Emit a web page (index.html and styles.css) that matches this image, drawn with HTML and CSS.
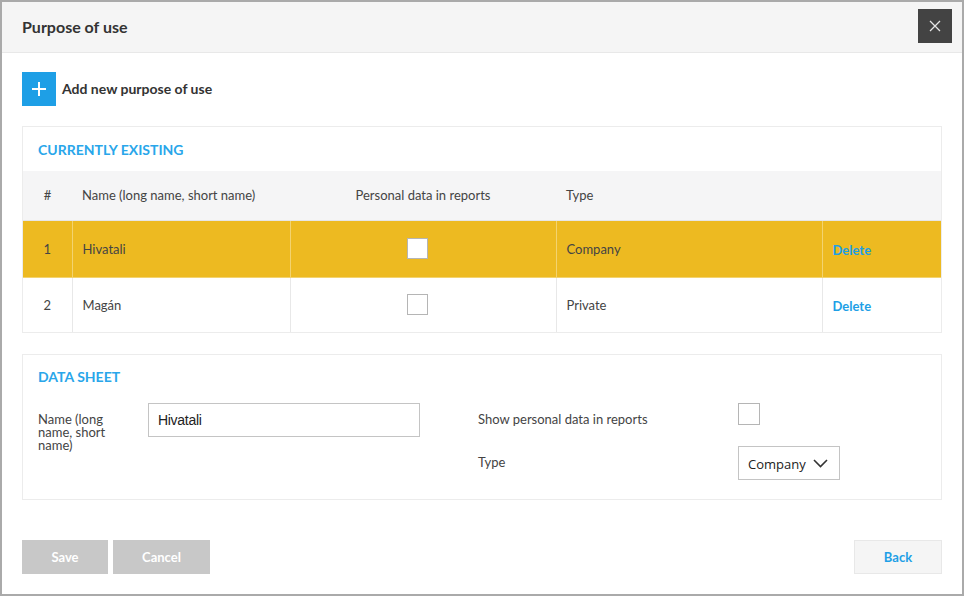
FILE: index.html
```html
<!DOCTYPE html>
<html>
<head>
<meta charset="utf-8">
<link rel="stylesheet" href="styles.css">
</head>
<body>
<div class="dialog">
  <div class="dialog-header">
    <h1 class="dialog-title">Purpose of use</h1>
    <button class="close-btn" aria-label="Close">
      <svg width="12" height="12" viewBox="0 0 12 12"><path d="M1 1L11 11M11 1L1 11" stroke="#e6e6e6" stroke-width="1.3" fill="none"/></svg>
    </button>
  </div>
  <div class="dialog-body">
    <div class="add-row">
      <span class="add-icon">
        <svg width="16" height="16" viewBox="0 0 16 16"><path d="M8 1V15M1 8H15" stroke="#fff" stroke-width="2" fill="none"/></svg>
      </span>
      <span class="add-label">Add new purpose of use</span>
    </div>

    <section class="panel">
      <h2 class="panel-title">CURRENTLY EXISTING</h2>
      <table class="list">
        <colgroup>
          <col class="c-num"><col class="c-name"><col class="c-pers"><col class="c-type"><col class="c-act">
        </colgroup>
        <thead>
          <tr>
            <th class="center">#</th>
            <th>Name (long name, short name)</th>
            <th class="center">Personal data in reports</th>
            <th>Type</th>
            <th></th>
          </tr>
        </thead>
        <tbody>
          <tr class="selected">
            <td class="center">1</td>
            <td>Hivatali</td>
            <td class="center"><span class="checkbox"></span></td>
            <td>Company</td>
            <td><a class="link">Delete</a></td>
          </tr>
          <tr>
            <td class="center">2</td>
            <td>Magán</td>
            <td class="center"><span class="checkbox"></span></td>
            <td>Private</td>
            <td><a class="link">Delete</a></td>
          </tr>
        </tbody>
      </table>
    </section>

    <section class="panel sheet">
      <h2 class="panel-title">DATA SHEET</h2>
      <div class="form">
        <div class="form-col left">
          <div class="form-row">
            <label class="name-label">Name (long name, short name)</label>
            <div class="text-input">Hivatali</div>
          </div>
        </div>
        <div class="form-col right">
          <div class="form-row">
            <span class="field-label">Show personal data in reports</span>
            <span class="checkbox big"></span>
          </div>
          <div class="form-row">
            <span class="field-label">Type</span>
            <div class="select">
              <span>Company</span>
              <svg width="15" height="9" viewBox="0 0 15 9"><path d="M1 1L7.5 7.5L14 1" stroke="#333" stroke-width="1.6" fill="none"/></svg>
            </div>
          </div>
        </div>
      </div>
    </section>

    <div class="footer">
      <div class="footer-left">
        <button class="btn btn-disabled save">Save</button>
        <button class="btn btn-disabled cancel">Cancel</button>
      </div>
      <button class="btn btn-back">Back</button>
    </div>
  </div>
</div>
</body>
</html>
```

FILE: styles.css
```css
* { box-sizing: border-box; }
html, body { margin: 0; padding: 0; background: #fff; }
body {
  font-family: Lato, "Open Sans", sans-serif;
  color: #444;
  font-size: 13px;
}
.dialog {
  width: 964px;
  height: 596px;
  border: 2px solid #aaaaaa;
  background: #fff;
  display: flex;
  flex-direction: column;
}
.dialog-header {
  height: 51px;
  flex: none;
  background: #f5f5f5;
  border-bottom: 1px solid #e8e8e8;
  display: flex;
  align-items: center;
  justify-content: space-between;
  padding: 0 10px 0 20px;
}
.dialog-title {
  margin: 0;
  font-size: 16px;
  font-weight: 700;
  color: #333;
  position: relative;
  top: -1px;
}
.close-btn {
  width: 34px;
  height: 34px;
  border: none;
  background: #434343;
  display: flex;
  align-items: center;
  justify-content: center;
  padding: 0;
  margin-top: -2px;
}
.dialog-body {
  padding: 19px 20px 0 20px;
  display: flex;
  flex-direction: column;
}
.add-row {
  display: flex;
  align-items: center;
  gap: 6px;
  height: 34px;
}
.add-icon {
  width: 34px;
  height: 34px;
  background: #1e9fe6;
  display: flex;
  align-items: center;
  justify-content: center;
}
.add-label {
  font-size: 14px;
  font-weight: 700;
  color: #333;
  position: relative;
  top: -1px;
}
.panel {
  margin-top: 20px;
  border: 1px solid #ececec;
  background: #fff;
}
.panel-title {
  margin: 0;
  height: 44px;
  line-height: 46px;
  padding-left: 15px;
  font-size: 14px;
  font-weight: 700;
  color: #29a6ea;
}
.list {
  width: 100%;
  border-collapse: collapse;
  table-layout: fixed;
}
.c-num { width: 49px; }
.c-name { width: 218px; }
.c-pers { width: 266px; }
.c-type { width: 266px; }
.c-act { width: auto; }
.list th {
  height: 49px;
  background: #f5f5f6;
  font-weight: 400;
  text-align: left;
  padding: 0 10px;
  color: #444;
  font-size: 13px;
  border-bottom: 1px solid #e6e6e6;
}
.list td {
  height: 57px;
  padding: 0 10px;
  color: #444;
  font-size: 13px;
  border-left: 1px solid #e8e8e8;
  border-bottom: 1px solid #e8e8e8;
}
.list tbody tr:last-child td { border-bottom: none; height: 55px; }
.list td:first-child { border-left: none; }
.list .center { text-align: center; }
.list tr.selected td {
  background: #edba21;
  border-left-color: #f3d36f;
  border-bottom-color: #f3d36f;
}
.list tr.selected td:first-child { border-left: none; }
.checkbox {
  display: inline-block;
  width: 21px;
  height: 21px;
  background: #fff;
  border: 1px solid #b5b5b5;
  vertical-align: middle;
  position: relative;
  left: -6px;
}
.link {
  color: #1e9fe6;
  font-weight: 700;
  font-size: 13px;
  position: relative;
  top: 1px;
}
.sheet { padding-bottom: 19px; margin-top: 21px; }
.sheet .panel-title { line-height: 44px; height: 48px; }
.form {
  display: flex;
  padding-left: 15px;
}
.form-col.left { width: 440px; }
.form-col.right {
  display: flex;
  flex-direction: column;
  gap: 10px;
}
.form-row {
  display: flex;
  align-items: flex-start;
}
.name-label {
  width: 80px;
  margin-right: 30px;
  padding-top: 10px;
  line-height: 13px;
  font-size: 13px;
  color: #444;
}
.text-input {
  width: 272px;
  height: 34px;
  border: 1px solid #c4c4c4;
  padding-left: 9px;
  line-height: 32px;
  font-family: "Liberation Sans", Arial, sans-serif;
  font-size: 14px;
  color: #222;
  letter-spacing: -0.3px;
}
.field-label {
  width: 260px;
  line-height: 33px;
  font-size: 13px;
  color: #444;
}
.checkbox.big { left: 0; vertical-align: top; width: 22px; height: 22px; }
.select {
  width: 102px;
  height: 34px;
  border: 1px solid #c4c4c4;
  display: flex;
  align-items: center;
  justify-content: space-between;
  padding: 0 11px 0 9px;
  font-family: "Open Sans", "Noto Sans", sans-serif;
  font-size: 13px;
  color: #222;
}
.select span { position: relative; top: 1px; }
.footer {
  margin-top: 40px;
  display: flex;
  justify-content: space-between;
}
.footer-left { display: flex; gap: 5px; }
.btn {
  height: 34px;
  border: none;
  font-family: Lato, sans-serif;
  font-size: 13px;
  font-weight: 700;
  padding: 0;
}
.btn-disabled { background: #c8c8c8; color: #fff; }
.save { width: 86px; }
.cancel { width: 97px; }
.btn-back {
  width: 88px;
  background: #f5f5f5;
  border: 1px solid #e8e8e8;
  color: #1e9fe6;
}
```
